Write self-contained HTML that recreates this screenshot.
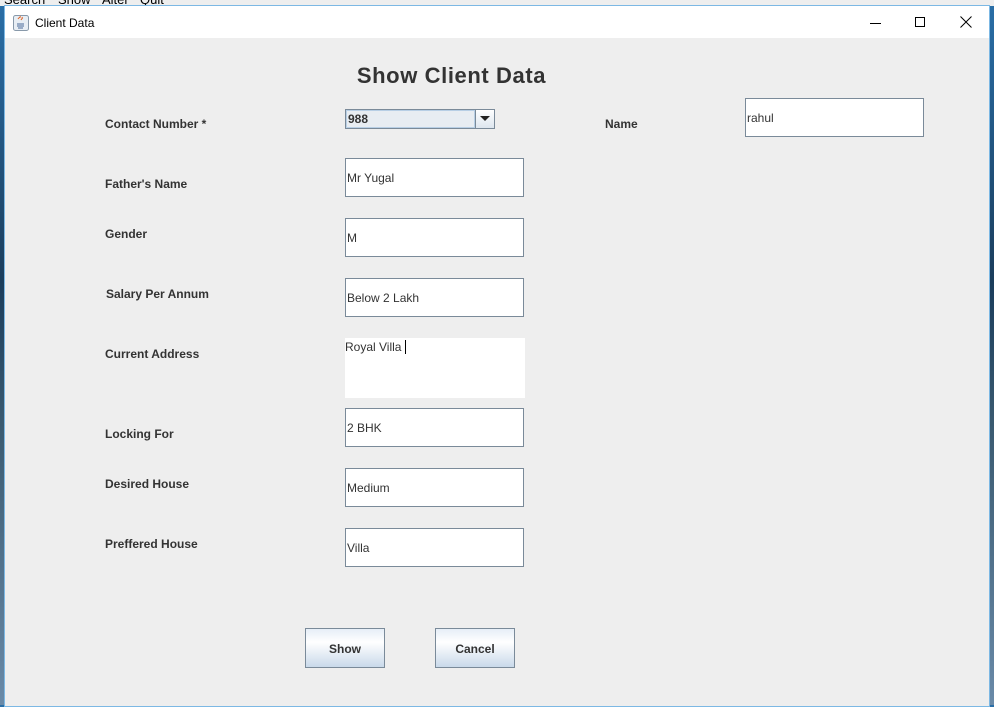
<!DOCTYPE html>
<html><head><meta charset="utf-8"><style>
*{margin:0;padding:0;box-sizing:border-box}
body{width:994px;height:705px;overflow:hidden;position:relative;background:linear-gradient(180deg,#2a6fa8,#1b3d5c 40%,#3a5a70 60%,#6a8aa8);font-family:"Liberation Sans",Arial,sans-serif}
.menu{position:absolute;left:0;top:-8px;height:14px;width:994px;background:#eee;font-size:13px;color:#000}
.menu span{position:absolute;top:0}
.win{position:absolute;left:4px;top:5px;width:986px;height:702px;border:1px solid #7cb8e4;background:#eeeeee}
.tb{position:absolute;left:0;top:0;width:984px;height:32px;background:#fff}
.tb .t{position:absolute;left:30px;top:10px;font-size:12px;color:#000}
.a{position:absolute}
.lbl{position:absolute;font-size:12px;font-weight:bold;color:#333}
.fld{position:absolute;width:179px;height:39px;background:#fff;border:1px solid #7a8a99;font-size:12px;color:#333;padding-left:1px;line-height:39px}
.btn{position:absolute;width:80px;height:40px;border:1px solid #7a8a99;background:linear-gradient(180deg,#e6eef7 0%,#fff 35%,#c9d9ea 100%);font-size:12px;font-weight:bold;color:#333;text-align:center;line-height:40px}
</style></head><body>
<div class="menu"><span style="left:4px">Search</span><span style="left:58px">Show</span><span style="left:102px">Alter</span><span style="left:140px">Quit</span></div>
<div class="win">
<div class="tb">
<svg class="a" style="left:8px;top:9px" width="16" height="16"><rect x="0.5" y="0.5" width="15" height="15" rx="2" fill="#e8eef4" stroke="#8899aa"/><path d="M5 4c1-2 3-1 2-3M8 5c1-2 2-1 1-3" stroke="#e06020" fill="none"/><path d="M4 9h7M4 11h7M5 13h5" stroke="#4a6a9a"/></svg>
<div class="t">Client Data</div>
<div class="a" style="left:865px;top:17px;width:11px;height:1px;background:#000"></div>
<div class="a" style="left:910px;top:11px;width:10px;height:10px;border:1px solid #000"></div>
<svg class="a" style="left:955px;top:10px" width="12" height="12"><path d="M0.5 0.5L11.5 11.5M11.5 0.5L0.5 11.5" stroke="#000"/></svg>
</div>
<div class="a" style="left:0;top:57px;width:893px;text-align:center;font-size:22px;letter-spacing:0.6px;font-weight:bold;color:#333">Show Client Data</div>

<div class="lbl" style="left:100px;top:111px">Contact Number *</div>
<div class="a" style="left:340px;top:103px;width:150px;height:20px;border:1px solid #7a8a99;background:#e8edf2">
<div class="a" style="left:0;top:0;width:129px;height:18px;border:1px solid #b8cfe5;font-size:12px;font-weight:bold;color:#333;padding-left:1px;line-height:16px">988</div>
<div class="a" style="left:129px;top:0;width:19px;height:18px;border-left:1px solid #7a8a99;background:linear-gradient(#fff,#dde6ef)"><svg width="19" height="18"><path d="M4 6h10l-5 5z" fill="#222"/></svg></div>
</div>
<div class="lbl" style="left:600px;top:111px">Name</div>
<div class="fld" style="left:740px;top:92px">rahul</div>

<div class="lbl" style="left:100px;top:171px">Father's Name</div>
<div class="fld" style="left:340px;top:152px">Mr Yugal</div>
<div class="lbl" style="left:100px;top:221px">Gender</div>
<div class="fld" style="left:340px;top:212px">M</div>
<div class="lbl" style="left:101px;top:281px">Salary Per Annum</div>
<div class="fld" style="left:340px;top:272px">Below 2 Lakh</div>
<div class="lbl" style="left:100px;top:341px">Current Address</div>
<div class="a" style="left:340px;top:332px;width:180px;height:60px;background:#fff;font-size:12px;color:#333;padding-top:2px">Royal Villa <span style="display:inline-block;width:1px;height:14px;background:#000;vertical-align:-3px"></span></div>
<div class="lbl" style="left:100px;top:421px">Locking For</div>
<div class="fld" style="left:340px;top:402px">2 BHK</div>
<div class="lbl" style="left:100px;top:471px">Desired House</div>
<div class="fld" style="left:340px;top:462px">Medium</div>
<div class="lbl" style="left:100px;top:531px">Preffered House</div>
<div class="fld" style="left:340px;top:522px">Villa</div>

<div class="btn" style="left:300px;top:622px">Show</div>
<div class="btn" style="left:430px;top:622px">Cancel</div>
</div>
</body></html>
